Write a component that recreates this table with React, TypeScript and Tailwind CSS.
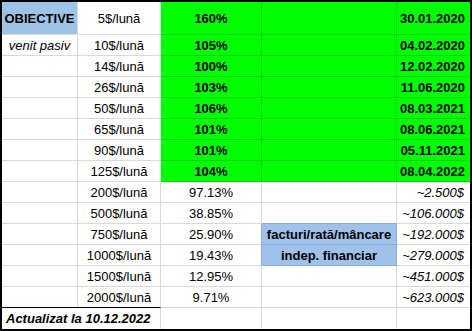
const rows = [
  { c1: 'venit pasiv', c2: '10$/lună', c3: '105%', c5: '04.02.2020' },
  { c2: '14$/lună', c3: '100%', c5: '12.02.2020' },
  { c2: '26$/lună', c3: '103%', c5: '11.06.2020' },
  { c2: '50$/lună', c3: '106%', c5: '08.03.2021' },
  { c2: '65$/lună', c3: '101%', c5: '08.06.2021' },
  { c2: '90$/lună', c3: '101%', c5: '05.11.2021' },
  { c2: '125$/lună', c3: '104%', c5: '08.04.2022' },
];

const plain = [
  { c2: '200$/lună', c3: '97.13%', c5: '~2.500$' },
  { c2: '500$/lună', c3: '38.85%', c5: '~106.000$' },
  { c2: '750$/lună', c3: '25.90%', c4: 'facturi/rată/mâncare', c5: '~192.000$' },
  { c2: '1000$/lună', c3: '19.43%', c4: 'indep. financiar', c5: '~279.000$' },
  { c2: '1500$/lună', c3: '12.95%', c5: '~451.000$' },
  { c2: '2000$/lună', c3: '9.71%', c5: '~623.000$' },
];

const cell = 'flex items-center border-b border-r border-[#d9d9d9] h-[21px]';
const greenCell = 'flex items-center border-b border-r border-[#00d400] bg-[#00ff00] h-[21px]';

export default function App() {
  return (
    <div
      className="w-[472px] h-[331px] bg-white border-2 border-black text-[13px] leading-none text-black overflow-hidden"
      style={{ fontFamily: '"Liberation Sans", Arial, sans-serif' }}
    >
      {/* header row */}
      <div className="flex h-[33px]">
        <div className="w-[76px] flex items-center justify-center border-b border-r border-[#d9d9d9] bg-[#9dc3e6] font-bold">
          OBIECTIVE
        </div>
        <div className="w-[83px] flex items-center justify-center border-b border-r border-[#d9d9d9]">5$/lună</div>
        <div className="w-[101px] flex items-center justify-center border-b border-r border-[#00d400] bg-[#00ff00] font-bold">160%</div>
        <div className="w-[135px] border-b border-r border-[#00d400] bg-[#00ff00]"></div>
        <div className="w-[73px] flex items-center justify-end pr-[5px] border-b border-[#00d400] bg-[#00ff00] font-bold">30.01.2020</div>
      </div>

      {rows.map((r, i) => (
        <div key={i} className="flex">
          <div className={`${cell} w-[76px] justify-center italic`}>{r.c1 ?? ''}</div>
          <div className={`${cell} w-[83px] justify-center`}>{r.c2}</div>
          <div className={`${greenCell} w-[101px] justify-center font-bold`}>{r.c3}</div>
          <div className={`${greenCell} w-[135px]`}></div>
          <div className={`${greenCell} w-[73px] justify-end pr-[5px] font-bold !border-r-0`}>{r.c5}</div>
        </div>
      ))}

      {plain.map((r, i) => (
        <div key={i} className="flex">
          <div className={`${cell} w-[76px]`}></div>
          <div className={`${cell} w-[83px] justify-center`}>{r.c2}</div>
          <div className={`${cell} w-[101px] justify-center ${r.c4 ? '!border-r-[#8eaadb]' : ''}`}>{r.c3}</div>
          {r.c4 ? (
            <div className={`${cell} w-[135px] justify-center font-bold bg-[#9fc1ea] !border-[#8eaadb]`}>{r.c4}</div>
          ) : (
            <div className={`${cell} w-[135px] ${i === 1 ? '!border-b-[#8eaadb]' : ''}`}></div>
          )}
          <div className={`${cell} w-[73px] justify-end pr-[6px] italic !border-r-0`}>{r.c5}</div>
        </div>
      ))}

      {/* footer */}
      <div className="flex h-[21px]">
        <div className="w-[159px] flex items-center pl-[4px] border-t border-r border-t-black border-r-[#d9d9d9] font-bold italic -mt-px">
          Actualizat la 10.12.2022
        </div>
        <div className="w-[101px] border-r border-[#d9d9d9]"></div>
        <div className="w-[135px] border-r border-[#d9d9d9]"></div>
        <div className="w-[73px]"></div>
      </div>
    </div>
  );
}
